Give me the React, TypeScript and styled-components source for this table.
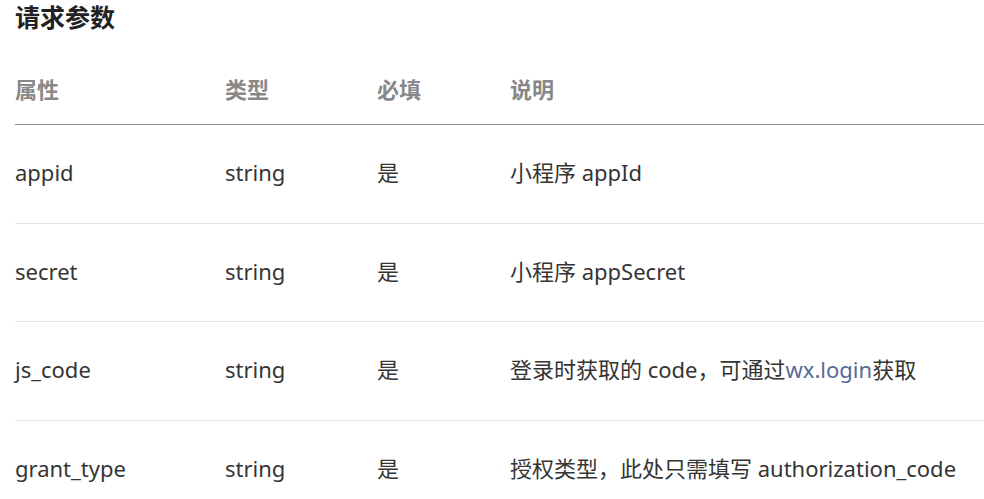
import styled, { createGlobalStyle } from "styled-components";

const GlobalStyle = createGlobalStyle`
  html, body {
    margin: 0;
    padding: 0;
    background: #fff;
  }
  body {
    font-family: "Noto Sans", "Noto Sans CJK SC", sans-serif;
    color: #353535;
    overflow: hidden;
  }
`;

const Page = styled.div`
  padding: 0 0 0 15px;
`;

const Title = styled.h3`
  margin: 0;
  font-size: 25px;
  line-height: 34px;
  font-weight: 700;
  color: #222;
`;

const Table = styled.table`
  width: 100%;
  margin-top: 25px;
  border-collapse: collapse;
  table-layout: fixed;
  font-size: 22px;
`;

const Th = styled.th<{ $w?: number }>`
  width: ${({ $w }) => ($w ? `${$w}px` : "auto")};
  text-align: left;
  font-weight: 700;
  color: #888;
  padding: 14px 0 19px;
  line-height: 32px;
  border-bottom: 1px solid #8f8f8f;
`;

const Td = styled.td`
  padding: 31px 0 34.5px;
  line-height: 32px;
  white-space: nowrap;
  border-bottom: 1px solid #e5e5e5;
`;

const Row = styled.tr`
  &:last-child td {
    border-bottom: none;
  }
`;

const Link = styled.a`
  color: #576b95;
  text-decoration: none;
`;

const rows = [
  { name: "appid", type: "string", req: "是", desc: <>小程序 appId</> },
  { name: "secret", type: "string", req: "是", desc: <>小程序 appSecret</> },
  {
    name: "js_code",
    type: "string",
    req: "是",
    desc: (
      <>
        登录时获取的 code，可通过<Link href="#">wx.login</Link>获取
      </>
    ),
  },
  {
    name: "grant_type",
    type: "string",
    req: "是",
    desc: <>授权类型，此处只需填写 authorization_code</>,
  },
];

export default function App() {
  return (
    <Page>
      <GlobalStyle />
      <Title>请求参数</Title>
      <Table>
        <thead>
          <tr>
            <Th $w={210}>属性</Th>
            <Th $w={152}>类型</Th>
            <Th $w={133}>必填</Th>
            <Th>说明</Th>
          </tr>
        </thead>
        <tbody>
          {rows.map((r) => (
            <Row key={r.name}>
              <Td>{r.name}</Td>
              <Td>{r.type}</Td>
              <Td>{r.req}</Td>
              <Td>{r.desc}</Td>
            </Row>
          ))}
        </tbody>
      </Table>
    </Page>
  );
}
